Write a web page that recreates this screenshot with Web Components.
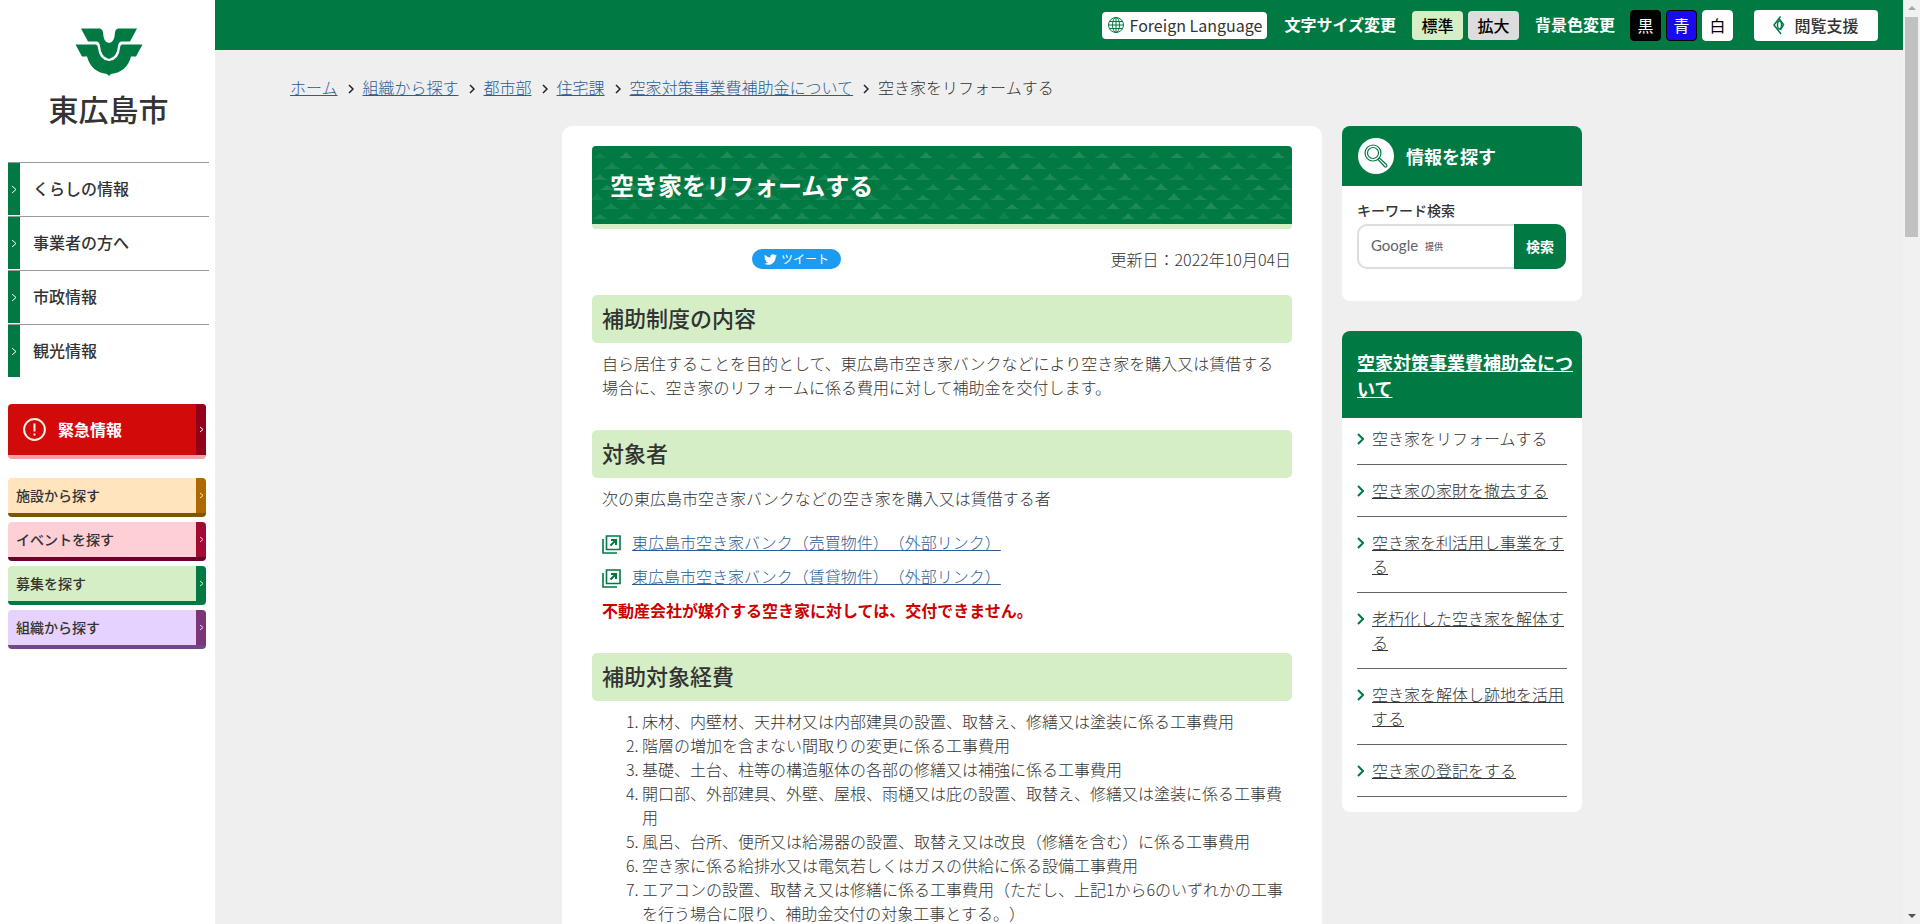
<!DOCTYPE html>
<html lang="ja">
<head>
<meta charset="utf-8">
<title>空き家をリフォームする - 東広島市</title>
<style>
:root{--green:#007943;--pale:#d5eec5;--ink:#333;--link:#2b5c94}
html,body{margin:0;height:100%}
body{font:300 16px/24px "Noto Sans CJK JP",sans-serif;color:var(--ink);background:#efefef;overflow:hidden;text-spacing-trim:space-all}
</style>
</head>
<body>
<city-page>
  <city-sidebar slot="side"></city-sidebar>
  <tool-bar slot="tools"></tool-bar>
  <bread-crumb slot="crumbs"></bread-crumb>
  <city-article slot="main" heading="空き家をリフォームする" date="2022年10月04日">
    <text-section heading="補助制度の内容">
      <p>自ら居住することを目的として、東広島市空き家バンクなどにより空き家を購入又は賃借する場合に、空き家のリフォームに係る費用に対して補助金を交付します。</p>
    </text-section>
    <text-section heading="対象者">
      <p>次の東広島市空き家バンクなどの空き家を購入又は賃借する者</p>
      <external-link>東広島市空き家バンク（売買物件）（外部リンク）</external-link>
      <external-link>東広島市空き家バンク（賃貸物件）（外部リンク）</external-link>
      <strong>不動産会社が媒介する空き家に対しては、交付できません。</strong>
    </text-section>
    <text-section heading="補助対象経費">
      <ol>
        <li>床材、内壁材、天井材又は内部建具の設置、取替え、修繕又は塗装に係る工事費用</li>
        <li>階層の増加を含まない間取りの変更に係る工事費用</li>
        <li>基礎、土台、柱等の構造躯体の各部の修繕又は補強に係る工事費用</li>
        <li>開口部、外部建具、外壁、屋根、雨樋又は庇の設置、取替え、修繕又は塗装に係る工事費用</li>
        <li>風呂、台所、便所又は給湯器の設置、取替え又は改良（修繕を含む）に係る工事費用</li>
        <li>空き家に係る給排水又は電気若しくはガスの供給に係る設備工事費用</li>
        <li>エアコンの設置、取替え又は修繕に係る工事費用（ただし、上記1から6のいずれかの工事を行う場合に限り、補助金交付の対象工事とする。）</li>
      </ol>
    </text-section>
  </city-article>
  <search-panel slot="aside"></search-panel>
  <related-panel slot="aside"></related-panel>
  <scroll-rail slot="rail"></scroll-rail>
</city-page>

<script>
const define = (name, html, setup) => customElements.define(name, class extends HTMLElement {
  constructor() {
    super();
    const t = document.createElement('template');
    t.innerHTML = `<style>*{box-sizing:border-box}a{color:inherit}button{font:inherit;border:0;margin:0;padding:0;cursor:pointer}ul{list-style:none;margin:0;padding:0}svg{display:block;flex:none}</style>` + html;
    this.attachShadow({ mode: 'open' }).append(t.content.cloneNode(true));
  }
  connectedCallback() { if (setup) setup(this, this.shadowRoot); }
});
const chevron = (w, h, sw) => `<svg width="${w}" height="${h}" viewBox="0 0 ${w} ${h}" fill="none" stroke="currentColor" stroke-width="${sw}"><path d="M1 1L${w - 1} ${h / 2}L1 ${h - 1}"/></svg>`;

define('city-page', `
<style>
:host{display:grid;grid-template-columns:215px 1fr 17px;height:100vh;overflow:hidden}
.body{min-width:0;overflow:hidden}
.area{padding:25px 49px 0 75px}
.cols{display:flex;justify-content:center;align-items:flex-start;gap:20px;margin-top:27px}
main{flex:0 1 760px;min-width:0}
aside{flex:none;width:240px;display:grid;gap:30px}
</style>
<slot name="side"></slot>
<div class="body">
  <slot name="tools"></slot>
  <div class="area">
    <slot name="crumbs"></slot>
    <div class="cols"><main><slot name="main"></slot></main><aside><slot name="aside"></slot></aside></div>
  </div>
</div>
<slot name="rail"></slot>`);

define('city-sidebar', `
<style>
:host{display:block;background:#fff;padding:28px 6px 0 8px;font-weight:500}
.logo{display:flex;flex-direction:column;align-items:center;gap:10px;color:var(--ink);text-decoration:none;font-size:30px;line-height:44px;margin-bottom:32px}
nav{margin-bottom:26px}
.quick{display:grid;gap:5px;margin-top:19px}
</style>
<a class="logo" href="#">
  <svg width="68" height="48" viewBox="0 0 68 48" fill="#007943"><path d="M6 0.500H25Q27.500 1 28 4Q28.500 15 34 15Q39.500 15 40 4Q40.500 1 43 0.500H62L55 13.500H46Q43.500 14 43 18Q42 29 34 31Q26 29 25 18Q24.500 14 22 13.500H13Z"/><path d="M0.500 16.500H21Q23 17 23 20Q24 32 34 33Q44 32 45 20Q45 17 47 16.500H67.500L61 28.500H56Q52 44 36 46L34 48L32 46Q16 44 12 28.500H7Z"/></svg>
  <span>東広島市</span>
</a>
<nav>
  <side-item>くらしの情報</side-item><side-item>事業者の方へ</side-item><side-item>市政情報</side-item><side-item>観光情報</side-item>
</nav>
<alert-button>緊急情報</alert-button>
<div class="quick">
  <quick-link style="--bg:#ffe4bd;--strip:#ad6900;--edge:#7d5500">施設から探す</quick-link>
  <quick-link style="--bg:#ffcfd6;--strip:#a30a32;--edge:#6d0029">イベントを探す</quick-link>
  <quick-link style="--bg:#d5eec5;--strip:#007943;--edge:#007943">募集を探す</quick-link>
  <quick-link style="--bg:#e5d2ff;--strip:#7c3578;--edge:#734787">組織から探す</quick-link>
</div>`);

define('side-item', `
<style>
:host{display:block;border-top:1px solid #999;padding-bottom:1px}
a{display:flex;align-items:center;height:52px;gap:13px;text-decoration:none;color:var(--ink)}
i{display:grid;place-items:center;width:12px;height:52px;background:var(--green);color:#fff}
span{padding-bottom:2px}
</style>
<a href="#"><i>${chevron(6, 9, 1)}</i><span><slot></slot></span></a>`);

define('alert-button', `
<style>
:host{display:block;margin-right:3px}
a{display:flex;align-items:center;height:55px;gap:12px;padding-left:15px;background:#d20a0a;border-bottom:4px solid #f4a0a5;border-radius:4px;color:#fff;font-weight:700;text-decoration:none;overflow:hidden}
i{display:grid;place-items:center;width:10px;align-self:stretch;margin-left:auto;background:#92001c}
span{padding-bottom:2px}
</style>
<a href="#"><svg width="23" height="23" viewBox="0 0 23 23" fill="none" stroke="#fff2e4" stroke-width="2"><circle cx="11.500" cy="11.500" r="10.400"/><path d="M11.500 5.500V13.500M11.500 15.500V17.500"/></svg><span><slot></slot></span><i>${chevron(5, 7, 1)}</i></a>`);

define('quick-link', `
<style>
:host{display:block;margin-right:3px}
a{display:flex;align-items:center;height:39px;padding-left:8px;background:var(--bg);border-bottom:4px solid var(--edge);border-radius:4px;color:var(--ink);font-size:14px;text-decoration:none;overflow:hidden}
i{display:grid;place-items:center;width:10px;align-self:stretch;margin-left:auto;background:var(--strip);color:var(--bg)}
span{padding-bottom:2px}
</style>
<a href="#"><span><slot></slot></span><i>${chevron(5, 7, 1)}</i></a>`);

define('tool-bar', `
<style>
:host{display:flex;align-items:center;justify-content:flex-end;height:50px;padding-right:25px;background:var(--green);color:#fff;font-weight:500}
b{font-weight:700;padding-bottom:2px}
.set{display:flex;align-items:center;gap:5px;margin-left:16px}
.set+b{margin-left:16px}
.set+b+.set{margin-left:15px}
.lang,.read{display:flex;align-items:center;justify-content:center;background:#fff;color:var(--ink);border-radius:4px}
.lang{width:165px;height:27px;gap:6px;margin-right:17px;font-weight:400}
.read{width:124px;height:31px;gap:9px;margin-left:21px}
.size{width:51px;height:29px;border-radius:4px;color:#000;background:#ddd}
.size.on{background:var(--pale)}
.tone{width:31px;height:31px;border-radius:4px;border:1px solid #000;font-weight:400}
.black{background:#000;color:#fff}.blue{background:#1a0af0;color:#fff}.white{background:#fff;color:#000;border-color:#fff}
</style>
<button class="lang"><svg width="16" height="16" viewBox="0 0 16 16" fill="none" stroke="#007943" stroke-width="1"><circle cx="8" cy="8" r="7.500"/><ellipse cx="8" cy="8" rx="3.500" ry="7.500"/><path d="M8 .5V15.500M.5 8H15.500M2 4.500H14M2 11.500H14"/></svg>Foreign Language</button>
<b>文字サイズ変更</b>
<div class="set"><button class="size on">標準</button><button class="size">拡大</button></div>
<b>背景色変更</b>
<div class="set"><button class="tone black">黒</button><button class="tone blue">青</button><button class="tone white">白</button></div>
<button class="read"><svg width="12" height="19" viewBox="0 0 12 19" fill="none" stroke="#007943" stroke-width="1.500"><path d="M7.500 0.500L1 9L8 18M6 2.500L10.500 8.500L7.500 14"/><ellipse cx="6.500" cy="9" rx="2" ry="4"/></svg>閲覧支援</button>`);

define('bread-crumb', `
<style>
ol{display:flex;flex-wrap:wrap;list-style:none;margin:0;padding:0}
li{display:flex;align-items:center}
li svg{margin:3px 9px 0 10px;color:#222}
:host{display:block}a{color:var(--link)}
</style>
<ol></ol>`, (el, root) => {
  const trail = ['ホーム', '組織から探す', '都市部', '住宅課', '空家対策事業費補助金について', '空き家をリフォームする'];
  root.querySelector('ol').innerHTML = trail
    .map((t, i) => `<li>${i ? chevron(6, 10, 1.5) : ''}${i < trail.length - 1 ? `<a href="#">${t}</a>` : t}</li>`).join('');
});

define('city-article', `
<style>
:host{display:block;background:#fff;border-radius:10px;padding:20px 30px}
h1{display:grid;align-items:center;margin:0;height:83px;border-radius:4px;border-bottom:5px solid var(--pale);background:var(--green);color:#fff;font-size:24px;line-height:36px;overflow:hidden}
h1>*{grid-area:1/1}
h1 span{padding-left:18px;z-index:1}
h1 svg{width:100%;height:78px}
.meta{display:grid;grid-template-columns:1fr auto;align-items:center;margin-top:18px;padding-right:1px}
.tweet{display:flex;align-items:center;gap:4px;justify-self:start;margin-left:160px;height:20px;padding:0 12px;border-radius:10px;background:#1d9bf0;color:#fff;font-size:12px;text-decoration:none;font-weight:400}
</style>
<h1><svg aria-hidden="true"><defs><pattern id="hills" width="352" height="78" patternUnits="userSpaceOnUse"></pattern></defs><rect width="100%" height="78" fill="url(#hills)"/></svg><span></span></h1>
<div class="meta"><a class="tweet" href="#"><svg width="13" height="13" viewBox="0 0 24 24" fill="#fff"><path d="M23.950 4.570a10 10 0 01-2.820.77 4.960 4.960 0 002.160-2.720c-.95.56-2 .96-3.130 1.190a4.920 4.920 0 00-8.380 4.480C7.690 8.100 4.070 6.130 1.640 3.160a4.820 4.820 0 00-.67 2.480c0 1.710.87 3.210 2.190 4.100a4.900 4.900 0 01-2.230-.62v.06a4.920 4.920 0 003.950 4.830 5 5 0 01-2.210.08 4.940 4.940 0 004.600 3.420A9.870 9.870 0 010 19.540a14 14 0 007.550 2.210c9.050 0 14-7.500 14-13.990 0-.21 0-.42-.02-.63a9.940 9.940 0 002.460-2.550z"/></svg>ツイート</a><span class="date"></span></div>
<slot></slot>`, (el, root) => {
  root.querySelector('h1 span').textContent = el.getAttribute('heading');
  root.querySelector('.date').textContent = '更新日：' + el.getAttribute('date');
  const rows = [[12, 5], [23, 16], [34, 3], [44, 12], [54, 1], [63, 14], [73, 5]];
  let d = '';
  rows.forEach(([y, x0], r) => {
    for (let i = 0; i < 14; i++) {
      const k = (i * 5 + r * 3) % 4, w = 6 + k, h = 5 + (i + r * 2) % 3, x = x0 + i * 25 + (i * 7 + r) % 3 + 3;
      d += `<path d="M${x - w} ${y}Q${x - 3} ${y - 2} ${x} ${y - h}Q${x + 3} ${y - 2} ${x + w} ${y}Z" fill="#fff" opacity="${(7 + (i * 3 + r) % 4 * 2) / 100}"/>`;
    }
  });
  root.querySelector('pattern').innerHTML = d;
});

define('text-section', `
<style>
:host{display:block;margin-top:24px}
:host(:not(:first-child)){margin-top:31px}
h2{margin:0;padding:0 10px;height:48px;border-radius:5px;background:var(--pale);font-size:22px;line-height:44px;font-weight:500}
div{padding:8px 5px 0 10px}
::slotted(p){margin:0 0 15px}
::slotted(ol){margin:0;padding-left:40px}
::slotted(strong){display:block;color:#c00;font-weight:700;margin:5px 0 15px}
</style>
<h2></h2><div><slot></slot></div>`, (el, root) => { root.querySelector('h2').textContent = el.getAttribute('heading'); });

define('external-link', `
<style>
:host{display:flex;align-items:center;gap:11px;height:34px}
a{color:var(--link)}svg{margin-top:4px}
</style>
<svg width="19" height="19" viewBox="0 0 19 19" fill="none" stroke="#007943" stroke-width="1.600"><path d="M4.500 1H18V14.500H4.500ZM1 4V18H15"/><path d="M8.500 10.500L13.500 5.500M9 5H14V10" stroke-width="2"/></svg><a href="#"><slot></slot></a>`);

define('search-panel', `
<style>
:host{display:block;height:175px;background:#fff;border-radius:8px;overflow:hidden}
h2{display:flex;align-items:center;gap:12px;height:60px;margin:0;padding-left:16px;background:var(--green);color:#fff;font-size:18px;line-height:26px}
i{display:grid;place-items:center;width:36px;height:36px;border-radius:50%;background:#fff}
form{padding:14px 15px}
label{display:block;font-size:14px;line-height:20px;font-weight:500;margin-bottom:4px}
.row{display:flex;height:45px;width:209px}
.box{flex:1;min-width:0;display:flex;align-items:center;gap:7px;padding-left:12px;border:2px solid #ddd;border-right:0;border-radius:10px 0 0 10px;color:#5f6368}
.g{font:400 15px/20px Lato,sans-serif;padding-bottom:3px}
small{font-size:9px;font-weight:500}
input{flex:1;min-width:0;border:0;outline:0;background:none;padding:0;font:inherit}
button{width:52px;padding-bottom:2px;background:var(--green);color:#fff;font-size:14px;font-weight:700;border-radius:0 10px 10px 0}
</style>
<h2><i><svg width="24" height="24" viewBox="0 0 24 24" fill="none" stroke="#007943" stroke-width="1.200"><circle cx="9" cy="9" r="8"/><circle cx="9" cy="9" r="5.500"/><path d="M14 15.500L15.500 14L22.500 20.500Q23.500 22 22.500 22.800Q21.500 23.500 20.500 22.500Z"/></svg></i>情報を探す</h2>
<form><label for="q">キーワード検索</label><div class="row"><div class="box"><span class="g">Google</span><small>提供</small><input id="q" type="text"></div><button type="button">検索</button></div></form>`);

define('related-panel', `
<style>
:host{display:block;background:#fff;border-radius:8px;overflow:hidden;padding-bottom:15px}
h2{margin:0;padding:18px 9px 17px 15px;background:var(--green);color:#fff;font-size:18px;line-height:26px}
ul{margin:-5px 15px 0}
li{display:flex;gap:8px;padding:13px 0 14px;border-bottom:1px solid #666}
svg{color:var(--green);margin-top:7px}
</style>
<h2><a href="#">空家対策事業費補助金について</a></h2>
<ul></ul>`, (el, root) => {
  root.querySelector('ul').innerHTML = ['空き家をリフォームする', '空き家の家財を撤去する', '空き家を利活用し事業をする', '老朽化した空き家を解体する', '空き家を解体し跡地を活用する', '空き家の登記をする']
    .map((t, i) => `<li>${chevron(7, 12, 2)}<span>${i ? `<a href="#">${t}</a>` : t}</span></li>`).join('');
});

define('scroll-rail', `
<style>
:host{display:flex;flex-direction:column;align-items:center;background:#f1f1f1;padding:6px 0;height:100vh;box-sizing:border-box}
.thumb{width:13px;height:220px;background:#c1c1c1;margin:7px 0 auto}
</style>
<svg width="8" height="4" viewBox="0 0 8 4"><path d="M0 4L4 0L8 4Z" fill="#a3a3a3"/></svg><div class="thumb"></div><svg width="8" height="4" viewBox="0 0 8 4"><path d="M0 0H8L4 4Z" fill="#505050"/></svg>`);
</script>
</body>
</html>
